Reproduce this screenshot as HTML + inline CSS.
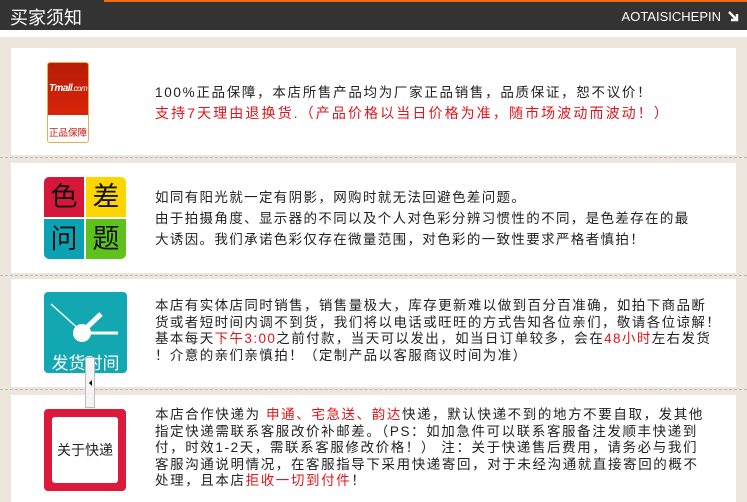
<!DOCTYPE html>
<html><head><meta charset="utf-8"><style>
*{margin:0;padding:0;box-sizing:border-box}
body{width:747px;height:502px;overflow:hidden;background:#ede6dc;font-family:"Liberation Sans","Noto Sans CJK SC",sans-serif;position:relative}
.hd{position:absolute;left:0;top:0;width:747px;height:30px;background:#333}
.hd .ol{position:absolute;left:104px;top:0;right:0;height:2px;background:#f26b0f}
.hd .t{position:absolute;left:10px;top:4px;color:#fff;font-size:18px}
.hd .r{position:absolute;right:26px;top:9px;color:#fff;font-size:13px}
.hd .a{position:absolute;right:8px;top:10px;width:12px;height:12px}
.ws{position:absolute;left:0;top:30px;width:747px;height:7px;background:#fff}
.p{position:absolute;left:11px;width:725px;background:#fff}
.dash{position:absolute;left:0;width:747px;border-top:1px dashed #b8b8b0}
.tx{position:absolute;left:155px;font-size:13.5px;color:#222;white-space:nowrap}
.red{color:#e3141b}
.ic{position:absolute}
</style></head><body>
<div class="hd"><div class="ol"></div><div class="t">买家须知</div><div class="r">AOTAISICHEPIN</div>
<svg class="a" viewBox="0 0 12 12"><path d="M2 2 L10 10 M10 4 V10 H4" stroke="#fff" stroke-width="2.4" fill="none"/></svg></div>
<div class="ws"></div>

<div class="p" style="top:48px;height:107px"></div>
<div class="dash" style="top:157px"></div>
<div class="p" style="top:163px;height:110px"></div>
<div class="dash" style="top:275px"></div>
<div class="p" style="top:279px;height:108px"></div>
<div class="dash" style="top:389px"></div>
<div class="p" style="top:395px;height:107px"></div>

<!-- tmall -->
<div class="ic" style="left:47px;top:62px;width:42px;height:81px;border:1px solid #d9b44a;border-radius:3px;background:#fff;overflow:hidden">
<div style="height:52px;background:linear-gradient(#b81d08,#d8240a);color:#fff;font-size:10px;font-weight:bold;font-style:italic;text-align:center;padding-top:20px;letter-spacing:-0.6px;white-space:nowrap">Tmall<span style="font-weight:normal;font-size:8px">.com</span></div>
<div style="text-align:center;color:#c8140c;font-size:9.5px;padding-top:10px;white-space:nowrap">正品保障</div></div>
<div class="tx" style="top:83px;line-height:20px;letter-spacing:1.7px">100%正品保障，本店所售产品均为厂家正品销售，品质保证，恕不议价！<br><span class="red" style="font-size:14px;letter-spacing:2.1px">支持7天理由退换货.（产品价格以当日价格为准，随市场波动而波动！）</span></div>

<!-- color -->
<div class="ic" style="left:44px;top:177px;width:82px;height:82px;border-radius:5px;overflow:hidden;font-size:27px;line-height:41px;text-align:center;color:#111">
<div style="position:absolute;left:0;top:0;width:40px;height:40px;background:#d6173a">色</div>
<div style="position:absolute;left:42px;top:0;width:40px;height:40px;background:#fdd600">差</div>
<div style="position:absolute;left:0;top:42px;width:40px;height:40px;background:#0ba3b3">问</div>
<div style="position:absolute;left:42px;top:42px;width:40px;height:40px;background:#5ec21c">题</div></div>
<div class="tx" style="top:187px;line-height:21px;letter-spacing:1.35px">如同有阳光就一定有阴影，网购时就无法回避色差问题。<br>由于拍摄角度、显示器的不同以及个人对色彩分辨习惯性的不同，是色差存在的最<br>大诱因。我们承诺色彩仅存在微量范围，对色彩的一致性要求严格者慎拍！</div>

<!-- clock -->
<div class="ic" style="left:44px;top:292px;width:83px;height:81px;background:#13a7b2;border-radius:4px">
<svg width="83" height="81" style="position:absolute;left:0;top:0"><path d="M7 12 L38 40" stroke="#fff" stroke-width="1.5"/><path d="M38 40 L57 22" stroke="#fff" stroke-width="5"/><path d="M38 41 L74 41" stroke="#fff" stroke-width="3"/><circle cx="38" cy="41" r="9" fill="#fff"/></svg>
<div style="position:absolute;left:0;width:83px;top:57px;text-align:center;color:#fff;font-size:17px">发货时间</div></div>
<div style="position:absolute;left:85px;top:357px;width:10px;height:51px;background:#f4f4f4;border:1px solid #bbb"></div>
<div style="position:absolute;left:89px;top:380px;width:0;height:0;border-top:3px solid transparent;border-bottom:3px solid transparent;border-right:3px solid #000"></div>
<div class="tx" style="top:298px;line-height:16.5px;letter-spacing:1.4px">本店有实体店同时销售，销售量极大，库存更新难以做到百分百准确，如拍下商品断<br>货或者短时间内调不到货，我们将以电话或旺旺的方式告知各位亲们，敬请各位谅解！<br>基本每天<span class="red">下午3:00</span>之前付款，当天可以发出，如当日订单较多，会在<span class="red">48小时</span>左右发货<br>！介意的亲们亲慎拍！（定制产品以客服商议时间为准）</div>

<!-- express -->
<div class="ic" style="left:44px;top:409px;width:82px;height:82px;background:#dc1a3c;border-radius:4px">
<div style="position:absolute;left:8px;top:8px;width:66px;height:66px;background:#fff;border-radius:3px;text-align:center;line-height:66px;font-size:14px;color:#222">关于快递</div></div>
<div class="tx" style="top:407px;line-height:16.5px;letter-spacing:1.6px">本店合作快递为 <span class="red">申通、宅急送、韵达</span>快递，默认快递不到的地方不要自取，发其他<br>指定快递需联系客服改价补邮差。（PS：如加急件可以联系客服备注发顺丰快递到<br>付，时效1-2天，需联系客服修改价格！） 注：关于快递售后费用，请务必与我们<br>客服沟通说明情况，在客服指导下采用快递寄回，对于未经沟通就直接寄回的概不<br>处理，且本店<span class="red">拒收一切到付件</span>！</div>
</body></html>
